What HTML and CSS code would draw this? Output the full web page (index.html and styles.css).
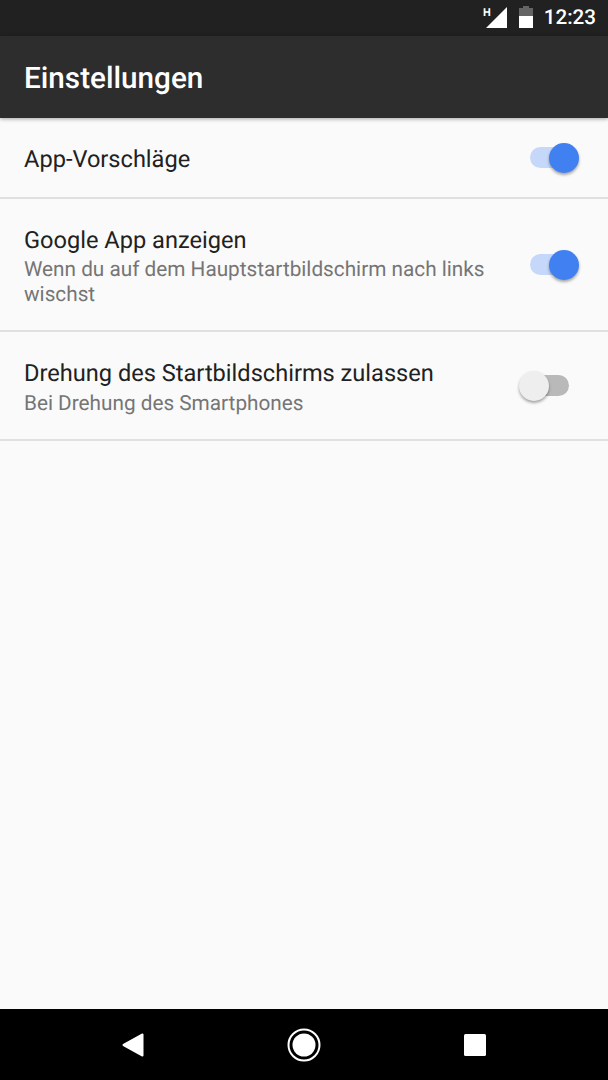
FILE: index.html
```html
<!DOCTYPE html>
<html lang="de">
<head>
<meta charset="utf-8">
<title>Einstellungen</title>
<link rel="stylesheet" href="styles.css">
</head>
<body>
<div class="screen">
  <div class="statusbar">
    <svg class="sb-net" width="27" height="22" viewBox="0 0 27 22">
      <text class="sb-h" x="0" y="10">H</text>
      <path d="M3 22 L24 1 V22 Z" fill="#fff"/>
    </svg>
    <svg class="sb-batt" width="14" height="22" viewBox="0 0 14 22">
      <path d="M4 0 H10 V2 H14 V10 H0 V2 H4 Z" fill="#fff" fill-opacity=".3"/>
      <rect x="0" y="10" width="14" height="12" fill="#fff"/>
    </svg>
    <span class="sb-time">12:23</span>
  </div>
  <header class="appbar"><h1 class="appbar-title">Einstellungen</h1></header>
  <main class="list">
    <div class="row row-single">
      <div class="row-text"><div class="row-title">App-Vorschläge</div></div>
      <div class="switch switch-on"><span class="track"></span><span class="thumb"></span></div>
    </div>
    <div class="row row-triple">
      <div class="row-text">
        <div class="row-title">Google App anzeigen</div>
        <div class="row-sub">Wenn du auf dem Hauptstartbildschirm nach links wischst</div>
      </div>
      <div class="switch switch-on"><span class="track"></span><span class="thumb"></span></div>
    </div>
    <div class="row row-double">
      <div class="row-text">
        <div class="row-title">Drehung des Startbildschirms zulassen</div>
        <div class="row-sub">Bei Drehung des Smartphones</div>
      </div>
      <div class="switch switch-off"><span class="track"></span><span class="thumb"></span></div>
    </div>
  </main>
  <nav class="navbar">
    <svg class="nav-icon" width="24" height="26" viewBox="0 0 24 26"><path d="M21.5 2.5 V23.5 L2.5 13 Z" fill="#fff" stroke="#fff" stroke-width="2" stroke-linejoin="round"/></svg>
    <svg class="nav-icon" width="34" height="34" viewBox="0 0 34 34"><circle cx="17" cy="17" r="15.5" fill="none" stroke="#fff" stroke-width="2"/><circle cx="17" cy="17" r="11.5" fill="#fff"/></svg>
    <svg class="nav-icon" width="24" height="24" viewBox="0 0 24 24"><rect x="1" y="1" width="22" height="22" rx="1.5" fill="#fff"/></svg>
  </nav>
</div>
</body>
</html>
```
FILE: styles.css
```css
* { box-sizing: border-box; }
html, body { margin: 0; padding: 0; }
body { font-family: Roboto, "Noto Sans", sans-serif; background: #fafafa; text-rendering: geometricPrecision; }
.screen { width: 608px; height: 1080px; display: flex; flex-direction: column; overflow: hidden; background: #fafafa; }
.statusbar { height: 36px; flex: none; background: #212121; display: flex; align-items: center; justify-content: flex-end; padding-right: 12px; color: #fff; }
.sb-net { margin-right: 9px; margin-top: -2px; }
.sb-h { font: 700 11px "Roboto", sans-serif; fill: #fff; }
.sb-batt { margin-right: 11px; margin-top: -2px; }
.sb-time { font-size: 20.6px; font-weight: 500; }
.appbar { height: 82px; flex: none; background: #2d2d2d; display: flex; align-items: center; padding-left: 24px; box-shadow: 0 1px 4px rgba(0,0,0,.35); position: relative; }
.appbar-title { margin: 0; font-size: 29.7px; font-weight: 500; line-height: 40px; color: #fff; padding-top: 4px; }
.list { flex: 1; }
.row { display: flex; align-items: center; padding: 0 28px 0 24px; border-bottom: 2px solid #e0e0e0; }
.row-single { height: 81px; }
.row-triple { height: 133px; }
.row-double { height: 109px; }
.row-text { flex: 1; min-width: 0; padding-right: 28px; padding-top: 2px; }
.row-title { font-size: 23.6px; line-height: 32px; color: #212121; }
.row-sub { font-size: 20.75px; line-height: 25px; margin-top: 2px; color: #757575; }
.row-double .row-sub { margin-top: 3px; }
.switch { position: relative; width: 61px; height: 30px; flex: none; }
.track { position: absolute; left: 11px; top: 4px; width: 39px; height: 21px; border-radius: 11px; }
.thumb { position: absolute; top: 0; width: 30px; height: 30px; border-radius: 50%; box-shadow: 0 2px 3px rgba(0,0,0,.35); }
.switch-on .track { background: #c6d8f9; }
.switch-on .thumb { left: 30px; background: #4080f0; }
.switch-off .track { background: #b9b9b9; }
.switch-off .thumb { left: 0; background: #eeeeee; }
.navbar { height: 71px; flex: none; background: #000; display: flex; align-items: center; justify-content: space-between; padding: 0 121px 0 121px; }
```
